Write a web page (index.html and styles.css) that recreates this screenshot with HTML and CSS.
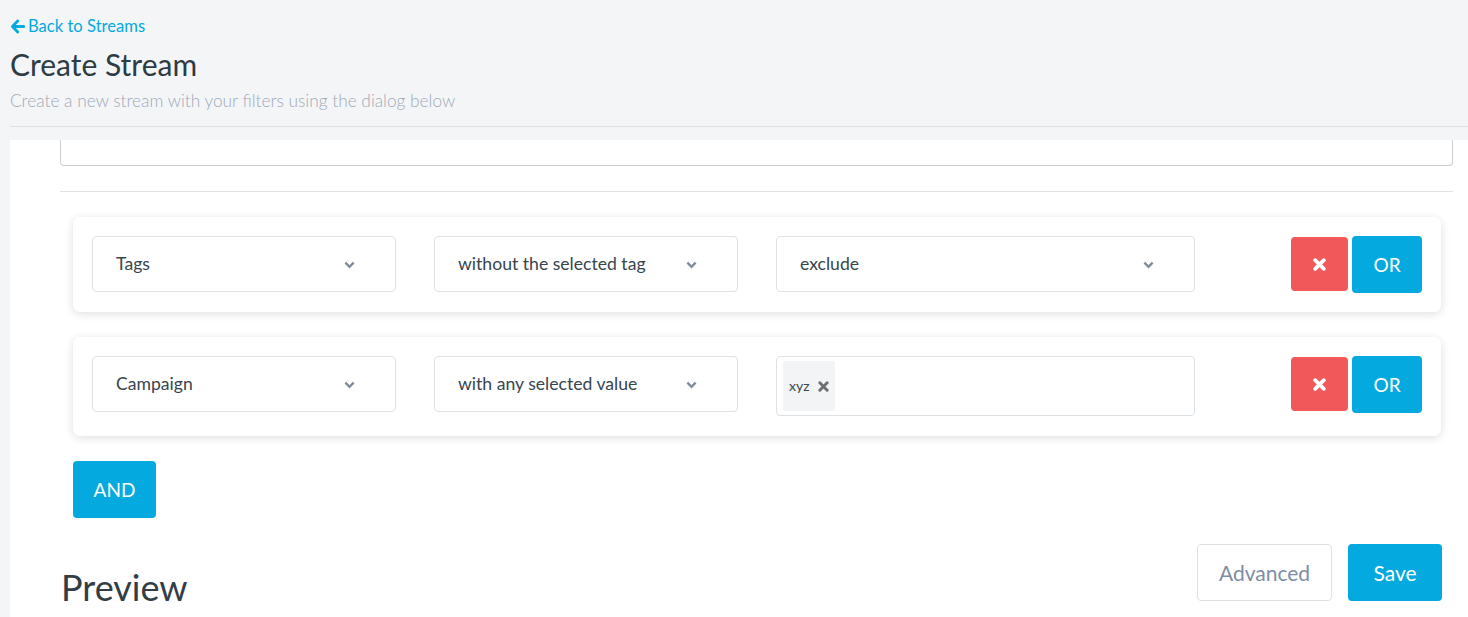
FILE: index.html
```html
<!DOCTYPE html>
<html>
<head>
<meta charset="utf-8">
<link rel="stylesheet" href="styles.css">
</head>
<body>
<div class="page">
  <div class="header">
    <a class="back" href="#"><svg class="back-icon" viewBox="0 0 16 16" width="15" height="15"><path d="M8.2 2.2 L2.6 8 L8.2 13.8 M2.8 8 H14.6" fill="none" stroke="#03a9df" stroke-width="3" stroke-linecap="round" stroke-linejoin="round"/></svg>Back to Streams</a>
    <h1 class="title">Create Stream</h1>
    <p class="subtitle">Create a new stream with your filters using the dialog below</p>
  </div>
  <div class="panel">
    <div class="partial-input"></div>
    <div class="rule"></div>
    <div class="filters">
      <div class="card">
        <div class="select w1"><span>Tags</span><svg class="chev" viewBox="0 0 12 8" width="11" height="8"><path d="M1.5 1.5 L6 6 L10.5 1.5" fill="none" stroke="#7e8b9c" stroke-width="2.6"/></svg></div>
        <div class="select w1"><span>without the selected tag</span><svg class="chev" viewBox="0 0 12 8" width="11" height="8"><path d="M1.5 1.5 L6 6 L10.5 1.5" fill="none" stroke="#7e8b9c" stroke-width="2.6"/></svg></div>
        <div class="select w2"><span>exclude</span><svg class="chev" viewBox="0 0 12 8" width="11" height="8"><path d="M1.5 1.5 L6 6 L10.5 1.5" fill="none" stroke="#7e8b9c" stroke-width="2.6"/></svg></div>
        <div class="actions">
          <button class="btn-del"><svg viewBox="0 0 12 12" width="13" height="13"><path d="M2 2 L10 10 M10 2 L2 10" stroke="#fff" stroke-width="3.4" stroke-linecap="round"/></svg></button>
          <button class="btn-or">OR</button>
        </div>
      </div>
      <div class="card">
        <div class="select w1"><span>Campaign</span><svg class="chev" viewBox="0 0 12 8" width="11" height="8"><path d="M1.5 1.5 L6 6 L10.5 1.5" fill="none" stroke="#7e8b9c" stroke-width="2.6"/></svg></div>
        <div class="select w1"><span>with any selected value</span><svg class="chev" viewBox="0 0 12 8" width="11" height="8"><path d="M1.5 1.5 L6 6 L10.5 1.5" fill="none" stroke="#7e8b9c" stroke-width="2.6"/></svg></div>
        <div class="multi w2">
          <span class="chip">xyz<svg viewBox="0 0 12 12" width="11" height="11"><path d="M2 2 L10 10 M10 2 L2 10" stroke="#6e6e6e" stroke-width="3.2" stroke-linecap="round"/></svg></span>
        </div>
        <div class="actions">
          <button class="btn-del"><svg viewBox="0 0 12 12" width="13" height="13"><path d="M2 2 L10 10 M10 2 L2 10" stroke="#fff" stroke-width="3.4" stroke-linecap="round"/></svg></button>
          <button class="btn-or">OR</button>
        </div>
      </div>
      <button class="btn-and">AND</button>
    </div>
    <div class="bottom">
      <h2 class="preview">Preview</h2>
      <div class="bottom-actions">
        <button class="btn-adv">Advanced</button>
        <button class="btn-save">Save</button>
      </div>
    </div>
  </div>
</div>
</body>
</html>
```

FILE: styles.css
```css
* { box-sizing: border-box; }
html, body { margin: 0; padding: 0; }
body {
  background: #f4f5f7;
  font-family: "Lato", "Open Sans", "Liberation Sans", sans-serif;
  color: #36444f;
  height: 617px;
  overflow: hidden;
}
.page { padding-left: 10px; }
.header {
  padding-top: 15px;
  border-bottom: 1px solid #dcdfe3;
  height: 127px;
}
.back {
  display: flex;
  align-items: center;
  gap: 3px;
  color: #03a9df;
  text-decoration: none;
  font-size: 16.6px;
  line-height: 22px;
}
.back-icon { display: block; }
.title {
  margin: 9px 0 0 0;
  font-size: 30px;
  line-height: 36px;
  font-weight: 400;
  color: #2d3b45;
}
.subtitle {
  margin: 9px 0 0 0;
  font-size: 17.3px;
  line-height: 20px;
  color: #9ea9b8;
  font-weight: 300;
}
.panel {
  background: #fff;
  margin-top: 13px;
  padding: 0 15px 0 50px;
  height: 480px;
}
.partial-input {
  height: 26px;
  border: 1px solid #cfcfcf;
  border-top: none;
  border-radius: 0 0 4px 4px;
}
.rule {
  margin-top: 25px;
  border-top: 1px solid #e2e2e2;
}
.filters {
  padding: 25px 12px 0 13px;
  display: flex;
  flex-direction: column;
  gap: 25px;
}
.card {
  background: #fff;
  border-radius: 7px;
  box-shadow: 0 2px 10px rgba(0,0,0,0.13);
  padding: 19px 19px 20px 19px;
  display: flex;
  align-items: flex-start;
}
.select, .multi {
  height: 56px;
  border: 1px solid #dde2e7;
  border-radius: 4px;
  display: flex;
  align-items: center;
  justify-content: space-between;
  padding: 0 40px 2px 23px;
  font-size: 17.6px;
  color: #37454f;
}
.select .chev { display: block; margin-top: 4px; }
.w1 { width: 304px; margin-right: 38px; }
.w2 { width: 419px; padding-right: 40px; }
.multi {
  height: 60px;
  padding: 4px 6px;
  align-items: stretch;
  justify-content: flex-start;
}
.chip {
  display: flex;
  align-items: center;
  gap: 8px;
  background: #f3f4f6;
  border-radius: 2px;
  padding: 0 4px 2px 6px;
  font-size: 14px;
  color: #3a4750;
  width: 52px;
}
.chip svg { display: block; margin-top: 2px; }
.actions {
  margin-left: auto;
  height: 56px;
  display: flex;
  align-items: flex-start;
  gap: 4px;
}
button {
  font-family: inherit;
  border: none;
  cursor: pointer;
  margin: 0;
}
.btn-del {
  width: 57px;
  height: 54px;
  margin-top: 1px;
  background: #f0585a;
  border-radius: 4px;
  display: flex;
  align-items: center;
  justify-content: center;
}
.btn-del svg { display: block; }
.btn-or {
  width: 70px;
  height: 57px;
  background: #03a9df;
  color: #fff;
  border-radius: 4px;
  font-size: 19px;
  padding: 0;
}
.btn-and {
  align-self: flex-start;
  width: 83px;
  height: 57px;
  background: #03a9df;
  color: #fff;
  border-radius: 4px;
  font-size: 19px;
  padding: 0;
}
.bottom {
  display: flex;
  align-items: flex-start;
  justify-content: space-between;
  margin-top: 26px;
  padding: 0 11px 0 1px;
}
.preview {
  margin: 23px 0 0 0;
  font-size: 36px;
  line-height: 40px;
  font-weight: 400;
  color: #333d45;
}
.bottom-actions {
  display: flex;
  gap: 16px;
}
.btn-adv {
  width: 135px;
  height: 57px;
  background: #fff;
  border: 1px solid #dde2e7;
  border-radius: 4px;
  color: #7e8da3;
  font-size: 21px;
}
.btn-save {
  width: 94px;
  height: 57px;
  background: #03a9df;
  color: #fff;
  border-radius: 4px;
  font-size: 21px;
}
```
